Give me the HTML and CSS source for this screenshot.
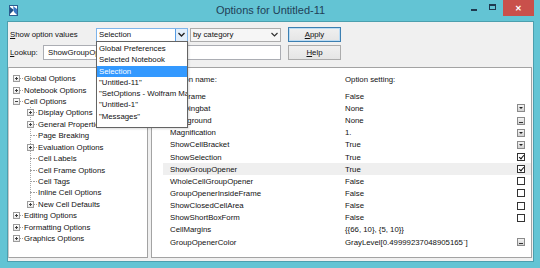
FILE: index.html
```html
<!DOCTYPE html>
<html lang="en">
<head>
    <meta charset="UTF-8">
    <title>Options for Untitled-11</title>
    <link rel="stylesheet" href="styles.css">
</head>
<body>

<div class="window">
    <div class="titlebar">
        <div class="app-icon">
            <svg width="9" height="11" viewBox="0 0 9 11">
                <rect x="0.5" y="0.5" width="8" height="10" fill="#ffffff" stroke="#2c5d8f"/>
                <path d="M1 2 L5 5 L1 9 Z" fill="#1f4f86"/>
                <path d="M4 1 L8 4 L8 10 L5 7 Z" fill="#3b78c4"/>
            </svg>
        </div>
        <div class="title">Options for Untitled-11</div>
        <div class="controls">
            <div class="ctl ctl-min"><span></span></div>
            <div class="ctl ctl-max"><span></span></div>
            <div class="ctl ctl-close">&#x2715;</div>
        </div>
    </div>

    <div class="client">
        <div class="row row-first">
            <label class="lbl lbl-show"><u>S</u>how option values</label>
            <div class="combo combo-focus">
                <span class="combo-text">Selection</span>
                <span class="combo-btn">
                    <svg width="7" height="5" viewBox="0 0 7 5"><path d="M0.5 1 L3.5 4 L6.5 1" fill="none" stroke="#222" stroke-width="1.4"/></svg>
                </span>
            </div>
            <div class="combo combo-plain">
                <span class="combo-text">by category</span>
                <span class="combo-btn">
                    <svg width="7" height="5" viewBox="0 0 7 5"><path d="M0.5 1 L3.5 4 L6.5 1" fill="none" stroke="#333" stroke-width="1.2"/></svg>
                </span>
            </div>
            <button class="btn btn-default"><u>A</u>pply</button>
        </div>

        <div class="row row-second">
            <label class="lbl lbl-lookup"><u>L</u>ookup:</label>
            <div class="field">ShowGroupOpener</div>
            <button class="btn"><u>H</u>elp</button>
        </div>

        <div class="panes">
            <div class="tree">
                <div class="node"><span class="box plus"></span><span class="stem"></span>Global Options</div>
                <div class="node"><span class="box plus"></span><span class="stem"></span>Notebook Options</div>
                <div class="node"><span class="box"></span><span class="stem"></span>Cell Options</div>
                <div class="children">
                    <div class="node sub"><span class="box plus"></span><span class="stem"></span>Display Options</div>
                    <div class="node sub"><span class="box plus"></span><span class="stem"></span>General Properties</div>
                    <div class="node sub"><span class="leaf"></span><span class="stem"></span>Page Breaking</div>
                    <div class="node sub"><span class="box plus"></span><span class="stem"></span>Evaluation Options</div>
                    <div class="node sub"><span class="leaf"></span><span class="stem"></span>Cell Labels</div>
                    <div class="node sub"><span class="leaf"></span><span class="stem"></span>Cell Frame Options</div>
                    <div class="node sub"><span class="leaf"></span><span class="stem"></span>Cell Tags</div>
                    <div class="node sub"><span class="leaf"></span><span class="stem"></span>Inline Cell Options</div>
                    <div class="node sub"><span class="box plus"></span><span class="stem"></span>New Cell Defaults</div>
                </div>
                <div class="node"><span class="box plus"></span><span class="stem"></span>Editing Options</div>
                <div class="node"><span class="box plus"></span><span class="stem"></span>Formatting Options</div>
                <div class="node"><span class="box plus"></span><span class="stem"></span>Graphics Options</div>
            </div>

            <div class="options">
                <div class="opt opt-head">
                    <span>Option name:</span>
                    <span>Option setting:</span>
                    <span></span>
                </div>
                <div class="opt"><span>CellFrame</span><span>False</span><span></span></div>
                <div class="opt"><span>CellDingbat</span><span>None</span><span class="pick"></span></div>
                <div class="opt"><span>Background</span><span>None</span><span class="more"></span></div>
                <div class="opt"><span>Magnification</span><span>1.</span><span class="pick"></span></div>
                <div class="opt"><span>ShowCellBracket</span><span>True</span><span class="pick"></span></div>
                <div class="opt"><span>ShowSelection</span><span>True</span><span class="check on"></span></div>
                <div class="opt opt-current"><span>ShowGroupOpener</span><span>True</span><span class="check on"></span></div>
                <div class="opt"><span>WholeCellGroupOpener</span><span>False</span><span class="check"></span></div>
                <div class="opt"><span>GroupOpenerInsideFrame</span><span>False</span><span class="check"></span></div>
                <div class="opt"><span>ShowClosedCellArea</span><span>False</span><span class="check"></span></div>
                <div class="opt"><span>ShowShortBoxForm</span><span>False</span><span class="check"></span></div>
                <div class="opt"><span>CellMargins</span><span>{{66, 10}, {5, 10}}</span><span></span></div>
                <div class="opt"><span>GroupOpenerColor</span><span>GrayLevel[0.49999237048905165`]</span><span class="more"></span></div>
            </div>
        </div>
    </div>

    <ul class="droplist">
        <li>Global Preferences</li>
        <li>Selected Notebook</li>
        <li class="picked">Selection</li>
        <li>"Untitled-11"</li>
        <li>"SetOptions - Wolfram Mathematica"</li>
        <li>"Untitled-1"</li>
        <li>"Messages"</li>
    </ul>
</div>

</body>
</html>
```

FILE: styles.css
```css
body {
    margin: 0;
    font-family: 'Liberation Sans', Arial, sans-serif;
    font-size: 7.8px;
    color: #111;
}

.window {
    position: relative;
    width: 540px;
    height: 268px;
    box-sizing: border-box;
    padding: 0 6px 6px 7px;
    background-color: #63c4d4;
    display: flex;
    flex-direction: column;
}

/* title bar */

.titlebar {
    height: 21px;
    display: grid;
    grid-template-columns: 1fr auto 1fr;
    align-items: start;
}

.app-icon {
    margin: 5px 0 0 2px;
    height: 11px;
}

.app-icon svg {
    display: block;
}

.title {
    font-size: 11px;
    line-height: 21px;
    color: #223f57;
}

.controls {
    justify-self: end;
    display: flex;
}

.ctl {
    height: 16px;
    display: flex;
    align-items: center;
    justify-content: center;
}

.ctl-min {
    width: 17px;
}

.ctl-min span {
    width: 6px;
    height: 2px;
    margin-top: 3px;
    background-color: #1f3a50;
}

.ctl-max {
    width: 17px;
    margin-left: 2px;
}

.ctl-max span {
    width: 7px;
    height: 6px;
    box-sizing: border-box;
    border: 1px solid #1f3a50;
    border-top-width: 2px;
    margin-top: -2px;
}

.ctl-close {
    width: 31px;
    margin-left: 2px;
    background-color: #c9504b;
    color: #fff;
    font-size: 8px;
    font-weight: bold;
}

/* dialog body */

.client {
    flex: 1;
    background-color: #f0f0f0;
    border: 1px solid #4c9fae;
    display: flex;
    flex-direction: column;
}

.row {
    display: flex;
    align-items: center;
}

.row-first {
    margin-top: 5px;
    height: 15px;
}

.row-second {
    margin-top: 3px;
    height: 15px;
}

.lbl {
    box-sizing: border-box;
    padding-left: 2px;
}

.lbl-show {
    width: 88px;
}

.lbl-lookup {
    width: 35px;
}

.combo {
    height: 14px;
    box-sizing: border-box;
    display: flex;
    align-items: stretch;
    border: 1px solid #acacac;
}

.combo-text {
    flex: 1;
    padding-left: 2px;
    line-height: 12px;
}

.combo-btn {
    width: 11px;
    display: flex;
    align-items: center;
    justify-content: center;
}

.combo-focus {
    width: 92px;
    background-color: #fff;
    border-color: #7eb4ea;
}

.combo-focus .combo-btn {
    background-color: #e3effb;
    border-left: 1px solid #569de5;
}

.combo-plain {
    width: 91px;
    margin-left: 2px;
    background-color: #f6f6f6;
}

.field {
    width: 238px;
    height: 15px;
    box-sizing: border-box;
    border: 1px solid #abadb3;
    background-color: #fff;
    padding-left: 4px;
    line-height: 13px;
    white-space: nowrap;
    overflow: hidden;
}

.btn {
    width: 53px;
    height: 15px;
    margin-left: 7px;
    padding: 0;
    font-family: inherit;
    font-size: inherit;
    color: #111;
    border: 1px solid #acacac;
    background: linear-gradient(#f0f0f0, #e5e5e5);
}

.btn-default {
    border-color: #3c7fb1;
    box-shadow: inset 0 0 0 1px #bcdcf4;
}

/* tree and options list */

.panes {
    flex: 1;
    display: flex;
    gap: 3px;
    margin: 7px 1px 3px 0;
}

.tree {
    width: 140px;
    box-sizing: border-box;
    border: 1px solid #a3a3a3;
    border-left-color: #c9c9c9;
    background-color: #fff;
    padding: 5px 0 0 4px;
}

.node {
    display: flex;
    align-items: center;
    height: 11.43px;
    white-space: nowrap;
}

.node.sub {
    padding-left: 14px;
}

.children {
    background-image: repeating-linear-gradient(to bottom, #a9a9a9 0 1px, transparent 1px 2px);
    background-size: 1px calc(100% - 6px);
    background-position: 17px 0;
    background-repeat: no-repeat;
}

.box {
    position: relative;
    width: 7px;
    height: 7px;
    box-sizing: border-box;
    border: 1px solid #9c9c9c;
    background: linear-gradient(#fff, #e8e8e8);
}

.box::before {
    content: '';
    position: absolute;
    left: 1px;
    right: 1px;
    top: 2px;
    height: 1px;
    background-color: #404040;
}

.box.plus::after {
    content: '';
    position: absolute;
    top: 1px;
    bottom: 1px;
    left: 2px;
    width: 1px;
    background-color: #404040;
}

.leaf {
    width: 7px;
    display: flex;
    justify-content: flex-end;
}

.leaf::after {
    content: '';
    width: 4px;
    border-top: 1px dotted #a0a0a0;
}

.stem {
    width: 3px;
    margin-right: 1px;
    border-top: 1px dotted #a0a0a0;
}

.options {
    flex: 1;
    box-sizing: border-box;
    border: 1px solid #a3a3a3;
    background-color: #fff;
    padding-top: 5px;
}

.opt {
    display: grid;
    grid-template-columns: 175px 1fr 9px;
    align-items: center;
    height: 12.17px;
    margin-left: 11px;
    padding: 0 5px 0 7px;
    white-space: nowrap;
}

.opt-head {
    margin-bottom: 5px;
}

.opt-current {
    background-color: #efefef;
}

.pick,
.more {
    position: relative;
    width: 6px;
    height: 6px;
    border: 1px solid #8a8a8a;
    background: linear-gradient(#f4f4f4, #d2d2d2);
}

.pick::after {
    content: '';
    position: absolute;
    left: 1px;
    top: 2px;
    border-left: 2px solid transparent;
    border-right: 2px solid transparent;
    border-top: 2px solid #222;
}

.more::after {
    content: '';
    position: absolute;
    left: 1px;
    right: 1px;
    bottom: 1px;
    height: 1px;
    background-color: #333;
}

.check {
    position: relative;
    width: 8px;
    height: 8px;
    box-sizing: border-box;
    border: 1px solid #333;
    background-color: #fff;
}

.check.on::after {
    content: '';
    position: absolute;
    left: 1.5px;
    top: -0.5px;
    width: 2px;
    height: 4px;
    border-right: 1.3px solid #111;
    border-bottom: 1.3px solid #111;
    transform: rotate(40deg);
}

/* open drop-down of the first combo */

.droplist {
    position: absolute;
    left: 96px;
    top: 41px;
    width: 92px;
    height: 87px;
    box-sizing: border-box;
    margin: 0;
    padding: 1px 0 0;
    list-style: none;
    background-color: #fff;
    border: 1px solid #646464;
    overflow: hidden;
    box-shadow: 1px 1px 2px rgba(0, 0, 0, 0.15);
}

.droplist li {
    height: 11.3px;
    line-height: 11.3px;
    padding-left: 2px;
    white-space: nowrap;
}

.droplist .picked {
    background-color: #3399ff;
    color: #fff;
}
```
